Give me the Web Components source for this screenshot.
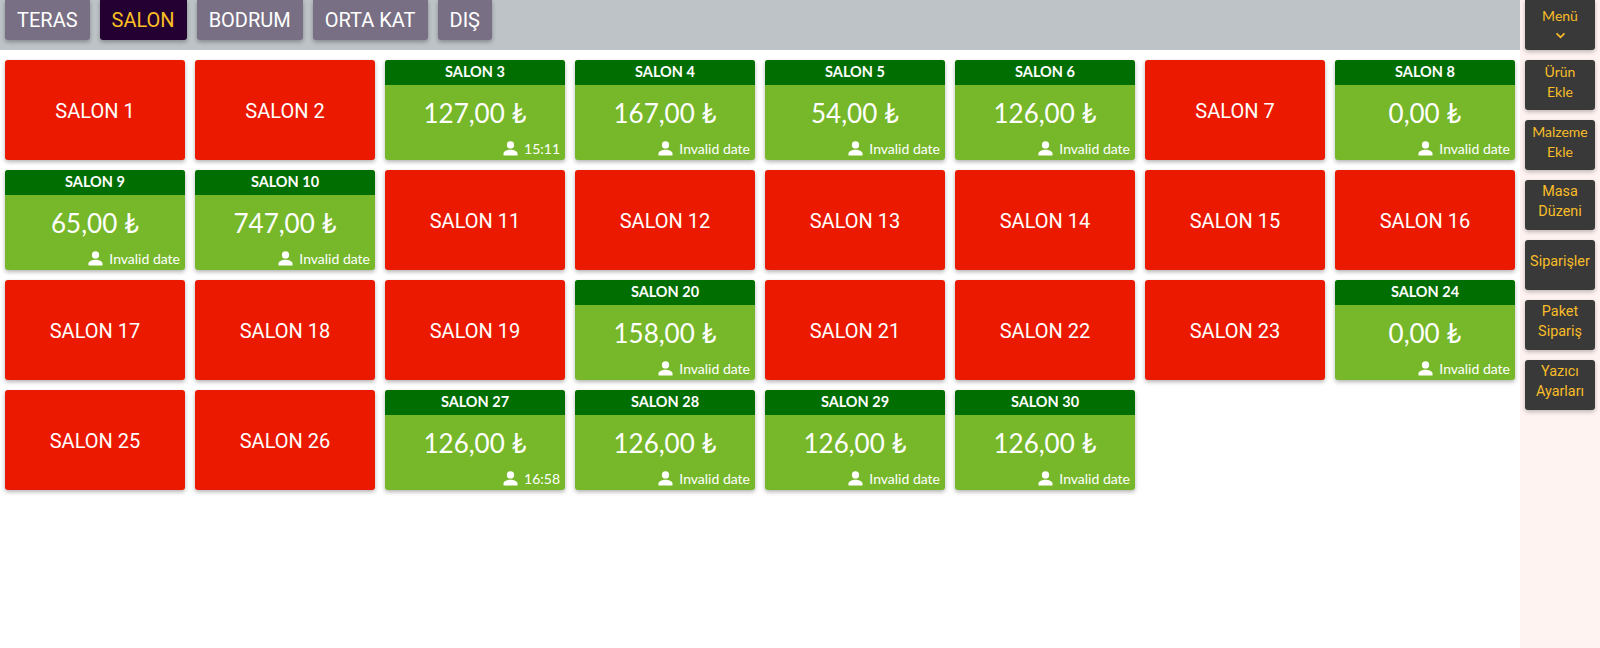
<!DOCTYPE html>
<html><head><meta charset="utf-8"><title>Masalar</title>
<style>html,body{margin:0;padding:0;height:100%;background:#fff;overflow:hidden}</style>
</head><body>
<pos-app></pos-app>
<template id="t-app"><style>
:host{display:flex;width:1600px;height:648px;overflow:hidden}
main{width:1520px;display:flex;flex-direction:column}
.tabs{display:flex;height:50px;background:#bdc3c7;flex:none}
.grid{display:flex;flex-wrap:wrap;align-content:flex-start;padding-top:5px}
aside{width:80px;background:#fff3f1;display:flex;flex-direction:column;align-items:center}
</style><main><div class="tabs" id="tabs"></div><div class="grid" id="grid"></div></main><aside id="side"></aside></template>
<template id="t-tab"><style>
:host{display:flex;align-items:center;height:40px;margin:0 5px;padding:0 12px;box-sizing:border-box;background:#786f85;color:#fff;border-radius:0 0 3px 3px;font:400 20px Roboto,sans-serif;box-shadow:0 2px 4px rgba(0,0,0,.3)}
:host([active]){background:#240032;color:#fbbf24}
</style><slot></slot></template>
<template id="t-empty"><style>
:host{display:flex;align-items:center;justify-content:center;width:180px;height:100px;margin:5px;padding-top:1px;box-sizing:border-box;background:#eb1900;color:#fff;border-radius:3px;font:400 20px Roboto,sans-serif;box-shadow:0 2px 4px rgba(0,0,0,.3)}
</style><slot></slot></template>
<template id="t-full"><style>
:host{display:flex;flex-direction:column;width:180px;height:100px;margin:5px;background:#76b82a;color:#fff;border-radius:3px;overflow:hidden;box-shadow:0 2px 4px rgba(0,0,0,.3);font-family:Lato,sans-serif}
.h{height:25px;flex:none;background:#006e00;display:flex;align-items:center;justify-content:center;font-weight:700;font-size:14.5px;padding-bottom:2px;box-sizing:border-box}
.p{height:50px;flex:none;display:flex;align-items:center;justify-content:center;font-size:26px;padding-top:5px;box-sizing:border-box}
.f{flex:1;display:flex;align-items:center;justify-content:flex-end;gap:6px;padding:1px 5px 0 0;font-size:14px}
svg{width:15px;height:15px;fill:#fff;display:block}
</style><div class="h"><slot></slot></div><div class="p" id="p"></div><div class="f"><svg viewBox="0 0 16 16"><circle cx="8" cy="4.2" r="3.9"/><path d="M0.5 15.5V13.4C0.5 10.8 5 9.4 8 9.4S15.5 10.8 15.5 13.4V15.5Z"/></svg><span id="t"></span></div></template>
<template id="t-side"><style>
:host{display:flex;flex-direction:column;align-items:center;justify-content:center;box-sizing:border-box;width:70px;height:50px;margin-bottom:10px;padding-bottom:6px;background:#393939;color:#f8bd28;border-radius:0 0 3px 3px;font:400 14.4px/20px Roboto,sans-serif;text-align:center;box-shadow:0 2px 4px rgba(0,0,0,.25)}
:host([rounded]){border-radius:3px}
:host([m]){font-family:Lato,sans-serif;font-size:14px;padding-bottom:7px}
:host([first]){padding-bottom:0}
</style><slot></slot></template>
<script>
function make(name,tpl,extra){customElements.define(name,class extends HTMLElement{constructor(){super();this.attachShadow({mode:'open'}).appendChild(document.getElementById(tpl).content.cloneNode(true));}connectedCallback(){if(extra)extra(this)}})}
make('floor-tab','t-tab');
make('table-empty','t-empty');
make('table-full','t-full',e=>{e.shadowRoot.getElementById('p').textContent=e.getAttribute('price');e.shadowRoot.getElementById('t').textContent=e.getAttribute('time')});
make('side-btn','t-side');
make('pos-app','t-app',e=>{
 const s=e.shadowRoot;
 [['TERAS'],['SALON',1],['BODRUM'],['ORTA KAT'],['DIŞ']].forEach(([n,a])=>{const t=document.createElement('floor-tab');t.textContent=n;if(a)t.setAttribute('active','');s.getElementById('tabs').appendChild(t)});
 const d={3:['127,00 ₺','15:11'],4:['167,00 ₺'],5:['54,00 ₺'],6:['126,00 ₺'],8:['0,00 ₺'],9:['65,00 ₺'],10:['747,00 ₺'],20:['158,00 ₺'],24:['0,00 ₺'],27:['126,00 ₺','16:58'],28:['126,00 ₺'],29:['126,00 ₺'],30:['126,00 ₺']};
 for(let i=1;i<=30;i++){const c=document.createElement(d[i]?'table-full':'table-empty');c.textContent='SALON '+i;if(d[i]){c.setAttribute('price',d[i][0]);c.setAttribute('time',d[i][1]||'Invalid date')}s.getElementById('grid').appendChild(c)}
 const side=s.getElementById('side');
 const m=document.createElement('side-btn');m.setAttribute('m','');m.setAttribute('first','');m.innerHTML='<span style="margin-top:-6px">Menü</span><svg width="11" height="7" viewBox="0 0 12 8" style="margin-top:6px;display:block"><path d="M1.5 1.5 6 6l4.5-4.5" fill="none" stroke="#f8bd28" stroke-width="2"/></svg>';side.appendChild(m);
 [['Ürün<br>Ekle',1],['Malzeme<br>Ekle',1],['Masa<br>Düzeni',0],['Siparişler',0],['Paket<br>Sipariş',0],['Yazıcı<br>Ayarları',0]].forEach(([h,l])=>{const b=document.createElement('side-btn');b.innerHTML=h;b.setAttribute('rounded','');if(l)b.setAttribute('m','');side.appendChild(b)});
});
</script>
</body></html>
